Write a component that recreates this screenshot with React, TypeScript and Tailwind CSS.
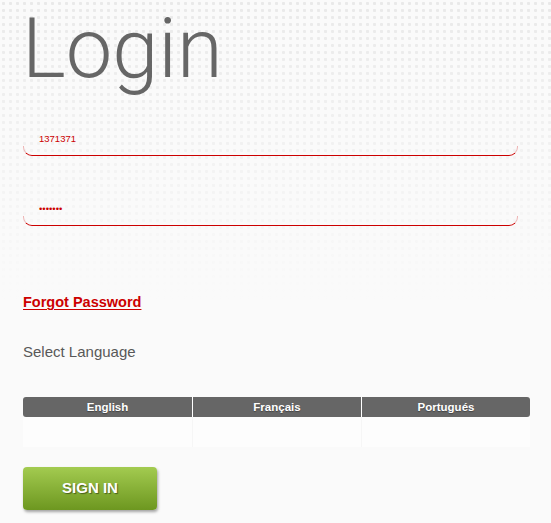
import React from 'react'

const langs = ['English', 'Français', 'Portugués']

const Field = ({ value }: { value: string }) => (
  <div className="w-[495px]">
    <div className="pl-[16px] text-[9.5px] leading-[12px] text-[#cc0000]">{value}</div>
    <div className="mt-[1px] h-[10px] rounded-b-[9px] border-x border-b border-x-[#eeb4b4] border-b-[#cc0000]" />
  </div>
)

const App = () => {
  return (
    <div className="min-h-[523px] w-[551px] bg-[#fafafa] bg-[linear-gradient(to_bottom,rgba(250,250,250,0)_0px,rgba(250,250,250,0.4)_120px,#fafafa_300px),radial-gradient(circle,#e9e9e9_1.3px,transparent_1.8px)] bg-[length:100%_100%,7px_7px] font-['Liberation_Sans',Arial,sans-serif]">
      <div className="pl-[23px] pt-[1px]">
        <h1 className="-ml-[1px] font-['Roboto',sans-serif] text-[83px] font-light leading-[96px] text-[#666666]">
          Login
        </h1>

        <div className="mt-[36px] flex flex-col gap-[47px]">
          <Field value="1371371" />
          <Field value="•••••••" />
        </div>

        <a
          href="#"
          className="mt-[67px] block w-fit text-[14.5px] font-bold leading-[18px] text-[#cc0000] underline underline-offset-[2px]"
        >
          Forgot Password
        </a>

        <div className="mt-[32px] text-[15px] leading-[18px] text-[#585858]">Select Language</div>

        <div className="mt-[36px] w-[507px]">
          <div className="grid grid-cols-3 rounded-[3px] bg-[#666666]">
            {langs.map((l, i) => (
              <div
                key={l}
                className={
                  'h-[20px] text-center text-[11.5px] font-bold leading-[20px] text-white [text-shadow:0_1px_1px_rgba(0,0,0,0.35)] ' +
                  (i > 0 ? 'border-l border-white' : '')
                }
              >
                {l}
              </div>
            ))}
          </div>
          <div className="grid grid-cols-3">
            {langs.map((l, i) => (
              <div
                key={l}
                className={'h-[30px] bg-[#fdfdfd] ' + (i > 0 ? 'border-l border-[#f6f6f6]' : '')}
              />
            ))}
          </div>
        </div>

        <button className="mt-[20px] mb-[13px] flex h-[43px] w-[134px] items-center justify-center rounded-[4px] bg-[linear-gradient(to_bottom,#a3cb50,#6d9720)] text-[15px] font-bold text-white shadow-[1px_2px_3px_rgba(0,0,0,0.35)] [text-shadow:1px_1px_1px_rgba(0,0,0,0.45)]">
          SIGN IN
        </button>
      </div>
    </div>
  )
}

export default App
